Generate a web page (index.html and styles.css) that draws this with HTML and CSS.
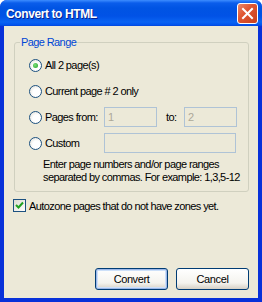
FILE: index.html
```html
<!DOCTYPE html>
<html>
<head>
  <meta charset="UTF-8">
  <title>Convert to HTML</title>
  <link rel="stylesheet" href="styles.css">
</head>
<body>
  <div class="window">
    <div class="titlebar">
      <span class="title">Convert to HTML</span>
      <span class="close-btn">
        <svg width="13" height="13" viewBox="0 0 13 13"><path d="M2 2 L11 11 M11 2 L2 11" stroke="#fff" stroke-width="2" stroke-linecap="square"/></svg>
      </span>
    </div>
    <div class="client">
      <fieldset class="group">
        <legend>Page Range</legend>
        <div class="row">
          <span class="radio checked"></span>
          <span class="label">All 2 page(s)</span>
        </div>
        <div class="row">
          <span class="radio"></span>
          <span class="label">Current page # 2 only</span>
        </div>
        <div class="row">
          <span class="radio"></span>
          <span class="label fixed">Pages from:</span>
          <span class="field small">1</span>
          <span class="to">to:</span>
          <span class="field small">2</span>
        </div>
        <div class="row">
          <span class="radio"></span>
          <span class="label fixed">Custom</span>
          <span class="field wide"></span>
        </div>
        <p class="hint">Enter page numbers and/or page ranges<br>separated by commas. For example: 1,3,5-12</p>
      </fieldset>
      <div class="check-row">
        <span class="checkbox">
          <svg width="9" height="9" viewBox="0 0 9 9"><path d="M1 4 L3.5 6.5 L8 1.5" stroke="#21a121" stroke-width="2" fill="none"/></svg>
        </span>
        <span>Autozone pages that do not have zones yet.</span>
      </div>
      <div class="buttons">
        <button class="btn default">Convert</button>
        <button class="btn">Cancel</button>
      </div>
    </div>
  </div>
</body>
</html>
```
FILE: styles.css
```css
body {
  margin: 0;
  padding: 0;
  font-family: "Liberation Sans", Arial, sans-serif;
  font-size: 11px;
  letter-spacing: -0.6px;
  color: #000;
}

.window {
  width: 262px;
  height: 302px;
  display: flex;
  flex-direction: column;
  background-color: #0831d9;
  border-radius: 7px 7px 0 0;
  overflow: hidden;
}

.titlebar {
  height: 26px;
  flex: none;
  display: flex;
  align-items: center;
  justify-content: space-between;
  padding: 0 4px 0 6px;
  background: linear-gradient(#3d8dff 0, #0a5deb 3px, #0054e3 8px, #0152e6 16px, #0a63f2 22px, #0053ee 25px, #0843d3 26px);
}

.title {
  color: #fff;
  font-weight: bold;
  font-size: 12px;
  letter-spacing: -0.4px;
  text-shadow: 1px 1px 0 #0a1e8c;
  margin-top: 1px;
}

.close-btn {
  width: 19px;
  height: 19px;
  border: 1px solid #fff;
  border-radius: 3px;
  background: linear-gradient(135deg, #e8896d 0, #e05632 40%, #c8401c 100%);
  display: flex;
  align-items: center;
  justify-content: center;
  margin-top: 1px;
}

.client {
  flex: 1;
  margin: 0 4px 4px 4px;
  background-color: #ece9d8;
  padding: 10px 9px 8px 10px;
  display: flex;
  flex-direction: column;
}

.group {
  margin: 0;
  padding: 3px 0 0 14px;
  height: 156px;
  border: 1px solid #d0d0bf;
  border-radius: 3px;
  box-sizing: border-box;
}

.group legend {
  color: #0046d5;
  padding: 0 1px;
  margin-left: -9px;
  line-height: 13px;
}

.row {
  height: 26px;
  display: flex;
  align-items: center;
  white-space: nowrap;
}

.radio {
  width: 11px;
  height: 11px;
  border: 1px solid #1c5180;
  border-radius: 50%;
  background: radial-gradient(circle at 60% 60%, #fff 40%, #dcdad0 100%);
  position: relative;
  flex: none;
}

.radio.checked::after {
  content: "";
  position: absolute;
  left: 3px;
  top: 3px;
  width: 5px;
  height: 5px;
  border-radius: 50%;
  background: radial-gradient(circle at 40% 40%, #7ee07e, #21a121);
}

.label {
  margin-left: 3px;
}

.label.fixed {
  width: 59px;
  flex: none;
}

.field {
  height: 18px;
  border: 1px solid #afc3d6;
  background-color: #ece9d8;
  color: #aca899;
  padding: 0 3px;
  line-height: 18px;
  box-sizing: content-box;
  flex: none;
}

.field.small {
  width: 45px;
}

.field.wide {
  width: 124px;
}

.to {
  width: 27px;
  padding-left: 9px;
  box-sizing: border-box;
  flex: none;
}

.hint {
  margin: 2px 0 0 14px;
  line-height: 13px;
  white-space: nowrap;
}

.check-row {
  display: flex;
  align-items: center;
  margin: 7px 0 0 -1px;
  gap: 3px;
  white-space: nowrap;
}

.checkbox {
  width: 11px;
  height: 11px;
  border: 1px solid #1c5180;
  background: linear-gradient(135deg, #dcdad0, #fff);
  display: flex;
  align-items: center;
  justify-content: center;
}

.buttons {
  margin-top: auto;
  display: flex;
  justify-content: flex-end;
  gap: 8px;
}

.btn {
  width: 73px;
  height: 22px;
  font-family: "Liberation Sans", Arial, sans-serif;
  font-size: 11px;
  letter-spacing: -0.4px;
  background: linear-gradient(#fff, #f4f3ee 70%, #d6d0c5);
  border: 1px solid #003c74;
  border-radius: 3px;
  padding: 0;
  color: #000;
}

.btn.default {
  box-shadow: inset 0 0 0 1px #9cb7e8, inset 0 0 0 2px #cde0f9;
}
```
